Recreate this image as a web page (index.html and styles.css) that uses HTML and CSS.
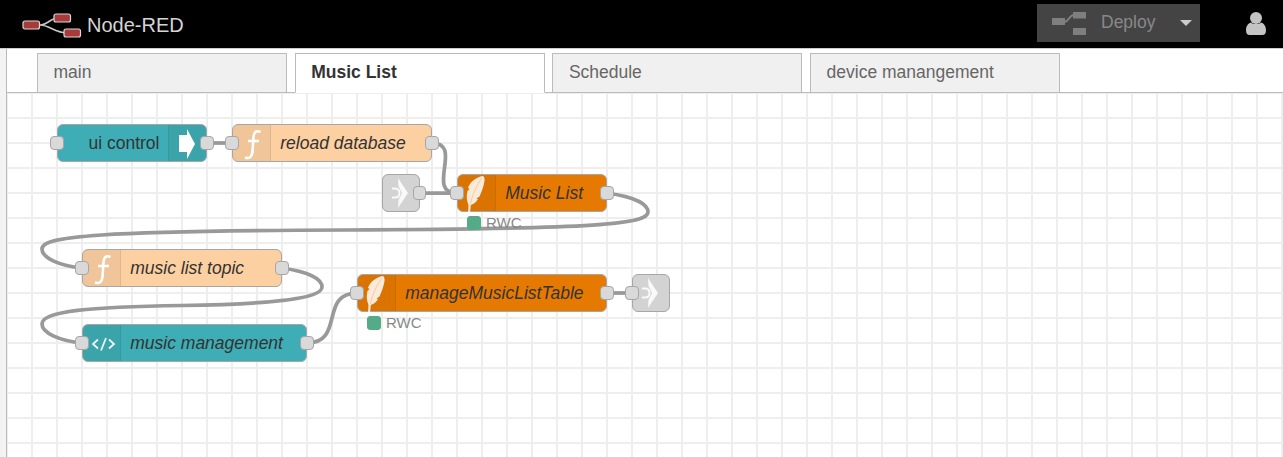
FILE: index.html
```html
<!DOCTYPE html>
<html>

<head>
  <meta charset="UTF-8" />
  <title>Node-RED</title>
  <link rel="stylesheet" href="styles.css">
</head>

<body>
  <header class="header">
    <div class="logo">
      <svg class="logo-icon" width="60" height="26" viewBox="0 0 60 26">
        <path class="logo-wire" d="M18 13 C26 13 28 6 36 6 M18 13 C28 13 32 21 46 21" />
        <rect class="logo-node" x="1" y="9" width="16.5" height="8" rx="2" />
        <rect class="logo-node" x="32" y="2" width="16.5" height="8" rx="2" />
        <rect class="logo-node" x="42" y="17" width="16.5" height="8" rx="2" />
      </svg>
      <span class="logo-text">Node-RED</span>
    </div>
    <div class="deploy">
      <svg class="deploy-icon" width="34" height="23" viewBox="0 0 34 23">
        <path class="deploy-wire" d="M12 10 C17 10 17 3 22 3" />
        <rect x="0" y="6" width="13" height="7" />
        <rect x="21" y="0" width="13" height="6.5" />
        <rect x="21" y="16" width="13" height="7" />
      </svg>
      <span class="deploy-text">Deploy</span>
      <span class="deploy-caret"></span>
    </div>
    <svg class="user-icon" width="20" height="23" viewBox="0 0 20 23">
      <circle cx="10" cy="6" r="6" />
      <path d="M0 18.5 C0 13 3 11 5 10.5 C7 12.5 13 12.5 15 10.5 C17 11 20 13 20 18.5 C20 21.5 18.5 23 16.5 23 H3.5 C1.5 23 0 21.5 0 18.5 Z" />
    </svg>
  </header>

  <div class="workspace">
    <div class="sidebar-strip"></div>
    <div class="main">
      <div class="tabs">
        <div class="tab">main</div>
        <div class="tab active">Music List</div>
        <div class="tab">Schedule</div>
        <div class="tab">device manangement</div>
      </div>

      <div class="canvas">
        <!-- wires, in page coordinates -->
        <svg class="wires" width="1276" height="364" viewBox="7 93 1276 364">
          <path d="M207 143 H232" />
          <path d="M432 143 C464 143 425 193 457 193" />
          <path d="M420 193 H457" />
          <path d="M607 193 C635 197 648 204 648 212 C648 224 600 229 345 230 C100 231 42 236 42 249 C42 258 60 266 82 268" />
          <path d="M282 268 C310 272 322 279 322 287 C322 299 270 304 182 305.5 C90 307 42 311 42 324 C42 333 60 341 82 343" />
          <path d="M307 343 C345 343 319 293 357 293" />
          <path d="M607 293 H632" />
        </svg>

        <div class="node teal ui-control">
          <div class="node-label plain">ui control</div>
          <div class="node-icon right">
            <svg width="37" height="38" viewBox="0 0 37 38">
              <polygon class="icon-fill" points="10,10 18,10 18,4 26,19 18,34 18,27 10,27" />
            </svg>
          </div>
          <span class="port in"></span>
          <span class="port out"></span>
        </div>

        <div class="node peach reload-database">
          <div class="node-icon">
            <svg width="37" height="38" viewBox="0 0 37 38">
              <path class="icon-line" d="M27.5 7 C23 5 21 7 20.5 12 L19.5 27 C19 32 16 34 12 32.5 M15 16 H26" />
            </svg>
          </div>
          <div class="node-label">reload database</div>
          <span class="port in"></span>
          <span class="port out"></span>
        </div>

        <div class="node grey link-in">
          <svg width="36" height="36" viewBox="0 0 36 36">
            <path class="icon-link" d="M15 3 L25 18 L15 33 L15.5 25 L19 18 L15.5 11 Z" />
            <path class="icon-link-d" d="M9 13.5 H12 C15 13.5 16.5 15.5 16.5 18 C16.5 20.5 15 22.5 12 22.5 H9" />
          </svg>
          <span class="port out"></span>
        </div>

        <div class="node orange music-list">
          <div class="node-icon">
            <svg width="37" height="40" viewBox="0 0 37 40">
              <path class="icon-feather" d="M25 1 C18 2 12 7 10 13 L11.5 14 L9.5 16 C8.5 20 8.5 24 9.5 27 L10.5 30 L10 38 L12 38 L12.8 30 C16 29 18.5 27 20 24 L18.5 23.5 L21.5 21.5 C24 16 26 10 26.5 6 C26.8 3.5 26.2 1.5 25 1 Z" />
              <path class="icon-quill" d="M12.5 29 C14 21 18 11 24 3" />
            </svg>
          </div>
          <div class="node-label">Music List</div>
          <span class="port in"></span>
          <span class="port out"></span>
        </div>
        <div class="status music-list-status">
          <span class="status-dot"></span>
          <span class="status-text">RWC</span>
        </div>

        <div class="node peach music-list-topic">
          <div class="node-icon">
            <svg width="37" height="38" viewBox="0 0 37 38">
              <path class="icon-line" d="M27.5 7 C23 5 21 7 20.5 12 L19.5 27 C19 32 16 34 12 32.5 M15 16 H26" />
            </svg>
          </div>
          <div class="node-label">music list topic</div>
          <span class="port in"></span>
          <span class="port out"></span>
        </div>

        <div class="node teal music-management">
          <div class="node-icon">
            <svg width="37" height="38" viewBox="0 0 37 38">
              <path class="icon-code" d="M15 14.5 L10 19 L15 23.5 M23 13 L18 25.5 M26 14.5 L31 19 L26 23.5" />
            </svg>
          </div>
          <div class="node-label">music management</div>
          <span class="port in"></span>
          <span class="port out"></span>
        </div>

        <div class="node orange manage-table">
          <div class="node-icon">
            <svg width="37" height="40" viewBox="0 0 37 40">
              <path class="icon-feather" d="M25 1 C18 2 12 7 10 13 L11.5 14 L9.5 16 C8.5 20 8.5 24 9.5 27 L10.5 30 L10 38 L12 38 L12.8 30 C16 29 18.5 27 20 24 L18.5 23.5 L21.5 21.5 C24 16 26 10 26.5 6 C26.8 3.5 26.2 1.5 25 1 Z" />
              <path class="icon-quill" d="M12.5 29 C14 21 18 11 24 3" />
            </svg>
          </div>
          <div class="node-label">manageMusicListTable</div>
          <span class="port in"></span>
          <span class="port out"></span>
        </div>
        <div class="status manage-table-status">
          <span class="status-dot"></span>
          <span class="status-text">RWC</span>
        </div>

        <div class="node grey link-out">
          <svg width="36" height="36" viewBox="0 0 36 36">
            <path class="icon-link" d="M15 3 L25 18 L15 33 L15.5 25 L19 18 L15.5 11 Z" />
            <path class="icon-link-d" d="M9 13.5 H12 C15 13.5 16.5 15.5 16.5 18 C16.5 20.5 15 22.5 12 22.5 H9" />
          </svg>
          <span class="port in"></span>
        </div>
      </div>
    </div>
  </div>
</body>

</html>
```

FILE: styles.css
```css
html,
body {
  height: 100%;
}

body {
  margin: 0;
  display: flex;
  flex-direction: column;
  overflow: hidden;
  font-family: "Liberation Sans", Arial, sans-serif;
  background-color: white;
  color: #333;
}

/* Header */
.header {
  flex: 0 0 48px;
  display: flex;
  align-items: flex-start;
  background-color: black;
}

.logo {
  display: flex;
  align-items: center;
  margin: 12px 0 0 22px;
  height: 26px;
}

.logo-wire {
  fill: none;
  stroke: #c8c8c8;
  stroke-width: 1.6;
}

.logo-node {
  fill: #a93a3a;
  stroke: #d9d9d9;
  stroke-width: 1.2;
}

.logo-text {
  margin-left: 5px;
  font-size: 20px;
  color: #d4d4d4;
}

.deploy {
  display: flex;
  align-items: center;
  width: 163px;
  height: 38px;
  margin: 4px 0 0 auto;
  background-color: #444;
  color: #888;
}

.deploy-icon {
  margin: 0 0 0 15px;
}

.deploy-icon rect {
  fill: #7f7f7f;
}

.deploy-wire {
  fill: none;
  stroke: #7f7f7f;
  stroke-width: 2;
}

.deploy-text {
  margin: -2px 0 0 15px;
  font-size: 17.5px;
}

.deploy-caret {
  width: 0;
  height: 0;
  margin-left: 25px;
  border-left: 6px solid transparent;
  border-right: 6px solid transparent;
  border-top: 6px solid #ccc;
}

.user-icon {
  margin: 12px 17px 0 46px;
  fill: #c4c4c4;
}

/* Workspace */
.workspace {
  flex: 1;
  display: flex;
  min-height: 0;
  border-top: 1px solid #ccc;
}

.sidebar-strip {
  flex: 0 0 6px;
  background-color: #f3f3f3;
  border-right: 1px solid #bbb;
}

.main {
  flex: 1;
  display: flex;
  flex-direction: column;
  min-width: 0;
}

.tabs {
  flex: 0 0 44px;
  box-sizing: border-box;
  display: flex;
  align-items: flex-end;
  gap: 7.7px;
  padding-left: 30px;
  border-bottom: 1px solid #bbb;
}

.tab {
  box-sizing: border-box;
  width: 250px;
  height: 40px;
  margin-bottom: -1px;
  padding: 0 15.5px;
  line-height: 37px;
  font-size: 17.5px;
  color: #666;
  background-color: #f0f0f0;
  border: 1px solid #bbb;
}

.tab.active {
  font-weight: bold;
  color: #333;
  background-color: white;
  border-bottom-color: white;
}

/* Flow canvas */
.canvas {
  flex: 1;
  position: relative;
  overflow: hidden;
  background-color: white;
  background-image: linear-gradient(#eee 2px, transparent 2px), linear-gradient(90deg, #eee 2px, transparent 2px);
  background-size: 25px 25px;
  background-position: 24px 24px;
}

.wires {
  position: absolute;
  top: 0;
  left: 0;
}

.wires path {
  fill: none;
  stroke: #999;
  stroke-width: 3.75;
}

.node {
  position: absolute;
  box-sizing: border-box;
  display: flex;
  height: 38px;
  border: 1.25px solid #a6a6a6;
  border-radius: 6px;
}

.node.teal {
  background-color: #3fadb5;
}

.node.peach {
  background-color: #fdd0a2;
}

.node.orange {
  background-color: #e67a00;
}

.node.grey {
  width: 38px;
  background-color: #d3d3d3;
}

.node-icon {
  flex: 0 0 37px;
  box-sizing: border-box;
  background-color: rgba(0, 0, 0, 0.05);
  border-right: 1px solid rgba(0, 0, 0, 0.07);
  border-radius: 5px 0 0 5px;
}

.node-icon.right {
  border-right: none;
  border-left: 1px solid rgba(0, 0, 0, 0.07);
  border-radius: 0 5px 5px 0;
}

.node svg {
  display: block;
  overflow: visible;
}

.node-label {
  flex: 1;
  padding-left: 9.5px;
  line-height: 36px;
  font-size: 17.5px;
  font-style: italic;
  white-space: nowrap;
}

.node-label.plain {
  padding-left: 22px;
  text-align: center;
  font-style: normal;
}

.icon-fill {
  fill: white;
}

.icon-line {
  fill: none;
  stroke: white;
  stroke-width: 2.6;
}

.icon-code {
  fill: none;
  stroke: white;
  stroke-width: 1.8;
  opacity: 0.9;
}

.icon-feather {
  fill: #fff;
  opacity: 0.85;
}

.icon-quill {
  fill: none;
  stroke: #e67a00;
  stroke-width: 0.7;
  opacity: 0.4;
}

.icon-link {
  fill: #fff;
  opacity: 0.85;
}

.icon-link-d {
  fill: none;
  stroke: #fff;
  stroke-width: 2;
  opacity: 0.85;
}

.port {
  position: absolute;
  top: 11px;
  box-sizing: border-box;
  width: 13.5px;
  height: 13.5px;
  background-color: #d9d9d9;
  border: 1.25px solid #a6a6a6;
  border-radius: 4px;
}

.port.in {
  left: -7.5px;
}

.port.out {
  right: -7.5px;
}

.ui-control {
  left: 49.75px;
  top: 31px;
  width: 150.5px;
}

.reload-database {
  left: 224.75px;
  top: 31px;
  width: 200.5px;
}

.link-in {
  left: 374.75px;
  top: 81px;
}

.music-list {
  left: 449.75px;
  top: 81px;
  width: 150.5px;
}

.music-list-topic {
  left: 74.75px;
  top: 156px;
  width: 200.5px;
}

.music-management {
  left: 74.75px;
  top: 231px;
  width: 225.5px;
}

.manage-table {
  left: 349.75px;
  top: 181px;
  width: 250.5px;
}

.link-out {
  left: 624.75px;
  top: 181px;
}

/* Node status */
.status {
  position: absolute;
  display: flex;
  align-items: center;
  gap: 5px;
  height: 14px;
  font-size: 15px;
  color: #888;
}

.status-text {
  margin-top: -2px;
}

.status-dot {
  box-sizing: border-box;
  width: 14px;
  height: 14px;
  background-color: #5a8;
  border: 1px solid #5a8;
  border-radius: 3px;
}

.music-list-status {
  left: 460px;
  top: 123px;
}

.manage-table-status {
  left: 360px;
  top: 223px;
}
```
